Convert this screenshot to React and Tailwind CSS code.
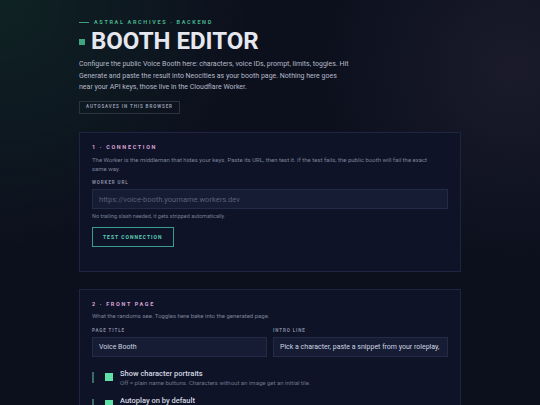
import React, { useState } from "react";

const sans = { fontFamily: "Roboto, 'Liberation Sans', sans-serif" };

function Toggle({ title, hint, on }) {
  return (
    <div className="flex items-start">
      <div className="w-[2px] h-[10.5px] mt-[3px] bg-[#3b6b68]" />
      <div className={`ml-[11px] mt-[4px] w-[8px] h-[8px] ${on ? "bg-[#5ee0a8]" : "bg-[#2a3248]"}`} />
      <div className="ml-[7px] flex flex-col">
        <span className="text-[7.5px] leading-[9px] font-medium text-[#d4d7e2]">{title}</span>
        <span className="text-[6px] leading-[9px] text-[#6f768c]">{hint}</span>
      </div>
    </div>
  );
}

function Label({ children }) {
  return (
    <div className="text-[4.5px] leading-[6px] font-bold tracking-[0.2em] uppercase text-[#858ba0]">{children}</div>
  );
}

export default function App() {
  const [workerUrl, setWorkerUrl] = useState("");
  const [pageTitle, setPageTitle] = useState("Voice Booth");
  const [intro, setIntro] = useState("Pick a character, paste a snippet from your roleplay, and hear it read aloud.");

  return (
    <div
      className="min-h-[405px] w-full bg-[#0c101d] bg-[radial-gradient(circle_at_0%_0%,#0f2224_0%,transparent_35%),radial-gradient(circle_at_95%_15%,#1a1a2b_0%,transparent_30%)]"
      style={sans}
    >
      <div className="mx-auto w-[382px] pt-[18px] pb-[20px]">
        <div className="flex items-center gap-[5px]">
          <div className="w-[10px] h-[1px] bg-[#3f9e7e]" />
          <span className="text-[5.5px] leading-[8px] font-bold tracking-[0.3em] text-[#45b48c]">ASTRAL ARCHIVES · BACKEND</span>
        </div>
        <div className="flex items-center mt-[1px]">
          <div className="w-[6px] h-[6px] bg-[#3fa57e] mt-[1px]" />
          <h1 className="ml-[6px] text-[24px] leading-[28px] font-bold text-[#e6e8f0]">BOOTH EDITOR</h1>
        </div>
        <p className="mt-[4px] w-[270px] text-[7px] leading-[11.6px] text-[#b5b9c8]">
          Configure the public Voice Booth here: characters, voice IDs, prompt, limits, toggles. Hit Generate and paste the result into Neocities as your booth page. Nothing here goes near your API keys, those live in the Cloudflare Worker.
        </p>
        <div className="mt-[7px] flex w-fit items-center h-[13px] px-[6px] border border-[#2c3242]">
          <span className="text-[4.5px] leading-[6px] font-bold tracking-[0.2em] text-[#9499ad]">AUTOSAVES IN THIS BROWSER</span>
        </div>

        <section className="mt-[18px] border border-[#1d2540] bg-[#0e1327] px-[12px] pt-[11px] pb-[24px]">
          <div className="text-[5.5px] leading-[7px] font-bold tracking-[0.3em] text-[#d9a3d6]">1 · CONNECTION</div>
          <p className="mt-[4px] text-[6px] leading-[9px] text-[#7b8298] pr-[20px]">
            The Worker is the middleman that hides your keys. Paste its URL, then test it. If the test fails, the public booth will fail the exact same way.
          </p>
          <div className="mt-[7.5px]">
            <Label>Worker URL</Label>
          </div>
          <input
            value={workerUrl}
            onChange={(e) => setWorkerUrl(e.target.value)}
            placeholder="https://voice-booth.yourname.workers.dev"
            className="block mt-[3px] w-full h-[20px] px-[6px] bg-[#151c34] border border-[#232b47] text-[7.5px] text-[#d0d4e0] placeholder:text-[#596078] outline-none"
          />
          <div className="mt-[2.5px] text-[5.5px] leading-[8px] text-[#777e94]">No trailing slash needed, it gets stripped automatically.</div>
          <button className="block mt-[7px] h-[20px] px-[10px] border border-[#3a9b8f] text-[5px] leading-[6px] font-bold tracking-[0.2em] text-[#5fcfb9]">
            TEST CONNECTION
          </button>
        </section>

        <section className="mt-[17px] border border-[#1d2540] bg-[#0e1327] px-[12px] pt-[11px] pb-[24px]">
          <div className="text-[5.5px] leading-[7px] font-bold tracking-[0.3em] text-[#d9a3d6]">2 · FRONT PAGE</div>
          <p className="mt-[3.5px] text-[6px] leading-[9px] text-[#7b8298]">
            What the randoms see. Toggles here bake into the generated page.
          </p>
          <div className="mt-[7.5px] grid grid-cols-2 gap-[6px]">
            <div>
              <Label>Page title</Label>
              <input
                value={pageTitle}
                onChange={(e) => setPageTitle(e.target.value)}
                className="block mt-[3px] w-full h-[20px] px-[6px] bg-[#151c34] border border-[#232b47] text-[7px] text-[#d0d4e0] outline-none"
              />
            </div>
            <div>
              <Label>Intro line</Label>
              <input
                value={intro}
                onChange={(e) => setIntro(e.target.value)}
                className="block mt-[3px] w-full h-[20px] px-[6px] bg-[#151c34] border border-[#232b47] text-[7px] text-[#d0d4e0] outline-none"
              />
            </div>
          </div>
          <div className="mt-[12.5px] flex flex-col gap-[9px]">
            <Toggle on title="Show character portraits" hint="Off = plain name buttons. Characters without an image get an initial tile." />
            <Toggle on title="Autoplay on by default" hint="Visitors can still flip it themselves, this is just the starting state." />
          </div>
        </section>
      </div>
    </div>
  );
}
